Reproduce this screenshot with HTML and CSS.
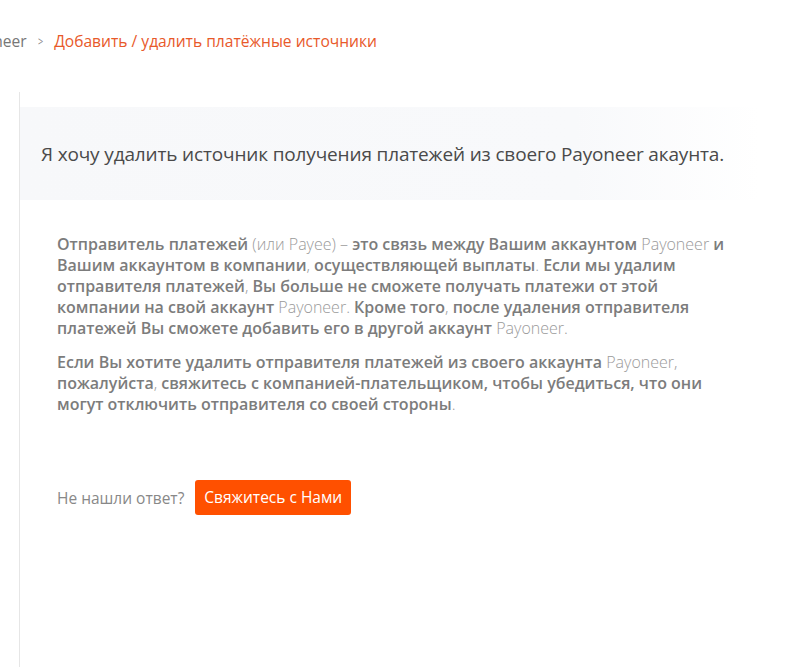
FILE: index.html
```html
<!DOCTYPE html>
<html lang="ru">
<head>
<meta charset="utf-8">
<title>Добавить / удалить платёжные источники</title>
<link rel="stylesheet" href="styles.css">
</head>
<body>
<nav class="crumbs">
  <a class="crumb" href="#">Payoneer</a>
  <span class="sep">&gt;</span>
  <span class="current">Добавить / удалить платёжные источники</span>
</nav>
<main class="panel">
  <header class="question">
    <h1>Я хочу удалить источник получения платежей из своего Payoneer акаунта.</h1>
  </header>
  <section class="answer">
    <p><b>Отправитель платежей</b> (или Payee) – <b>это связь между Вашим аккаунтом</b> Payoneer <b>и Вашим аккаунтом в компании</b>, <b>осуществляющей выплаты</b>. <b>Если мы удалим отправителя платежей</b>, <b>Вы больше не сможете получать платежи от этой компании на свой аккаунт</b> Payoneer. <b>Кроме того</b>, <b>после удаления отправителя платежей Вы сможете добавить его в другой аккаунт</b> Payoneer.</p>
    <p><b>Если Вы хотите удалить отправителя платежей из своего аккаунта</b> Payoneer, <b>пожалуйста</b>, <b>свяжитесь с компанией-плательщиком, чтобы убедиться, что они могут отключить отправителя со своей стороны</b>.</p>
  </section>
  <footer class="contact">
    <span class="hint">Не нашли ответ?</span>
    <a class="btn" href="#">Свяжитесь с Нами</a>
  </footer>
</main>
</body>
</html>
```
FILE: styles.css
```css
html, body {
  margin: 0;
  padding: 0;
  background: #fff;
  font-family: "Open Sans", "Noto Sans", sans-serif;
}
body {
  overflow: hidden;
  height: 667px;
}
.crumbs {
  display: flex;
  align-items: center;
  gap: 10px;
  padding-top: 30px;
  height: 22px;
  font-size: 15.6px;
  white-space: nowrap;
}
.crumb {
  color: #777;
  text-decoration: none;
  margin-left: -42px;
}
.sep {
  color: #888;
  font-size: 13px;
  transform: scaleX(0.7);
  display: inline-block;
}
.current {
  color: #e8592a;
}
.panel {
  margin-top: 40px;
  margin-left: 19px;
  border-left: 1px solid #e6e6e6;
  padding-top: 15px;
  height: 560px;
}
.question {
  height: 93px;
  display: flex;
  align-items: center;
  padding-left: 21px;
  margin-right: 40px;
  background: linear-gradient(90deg, #f7f8fa 0%, #f8f9fb 75%, #ffffff 100%);
}
.question h1 {
  margin: 0;
  font-size: 19px;
  font-weight: 400;
  color: #4a4a4a;
  letter-spacing: -0.15px;
}
.answer {
  padding: 34px 65px 0 37px;
  color: #9a9a9a;
  font-size: 16px;
  line-height: 21px;
}
.answer p {
  margin: 0 0 13px;
  font-weight: 300;
}
.answer b {
  font-weight: 600;
  color: #7c7c7c;
}
.contact {
  margin-top: 65px;
  padding-left: 37px;
  display: flex;
  align-items: center;
  gap: 11px;
}
.hint {
  color: #888;
  font-size: 15.5px;
}
.btn {
  background: #ff5000;
  color: #fff;
  text-decoration: none;
  font-size: 15.5px;
  border-radius: 3px;
  padding: 7px 9px 8px;
  line-height: 20px;
}
```
